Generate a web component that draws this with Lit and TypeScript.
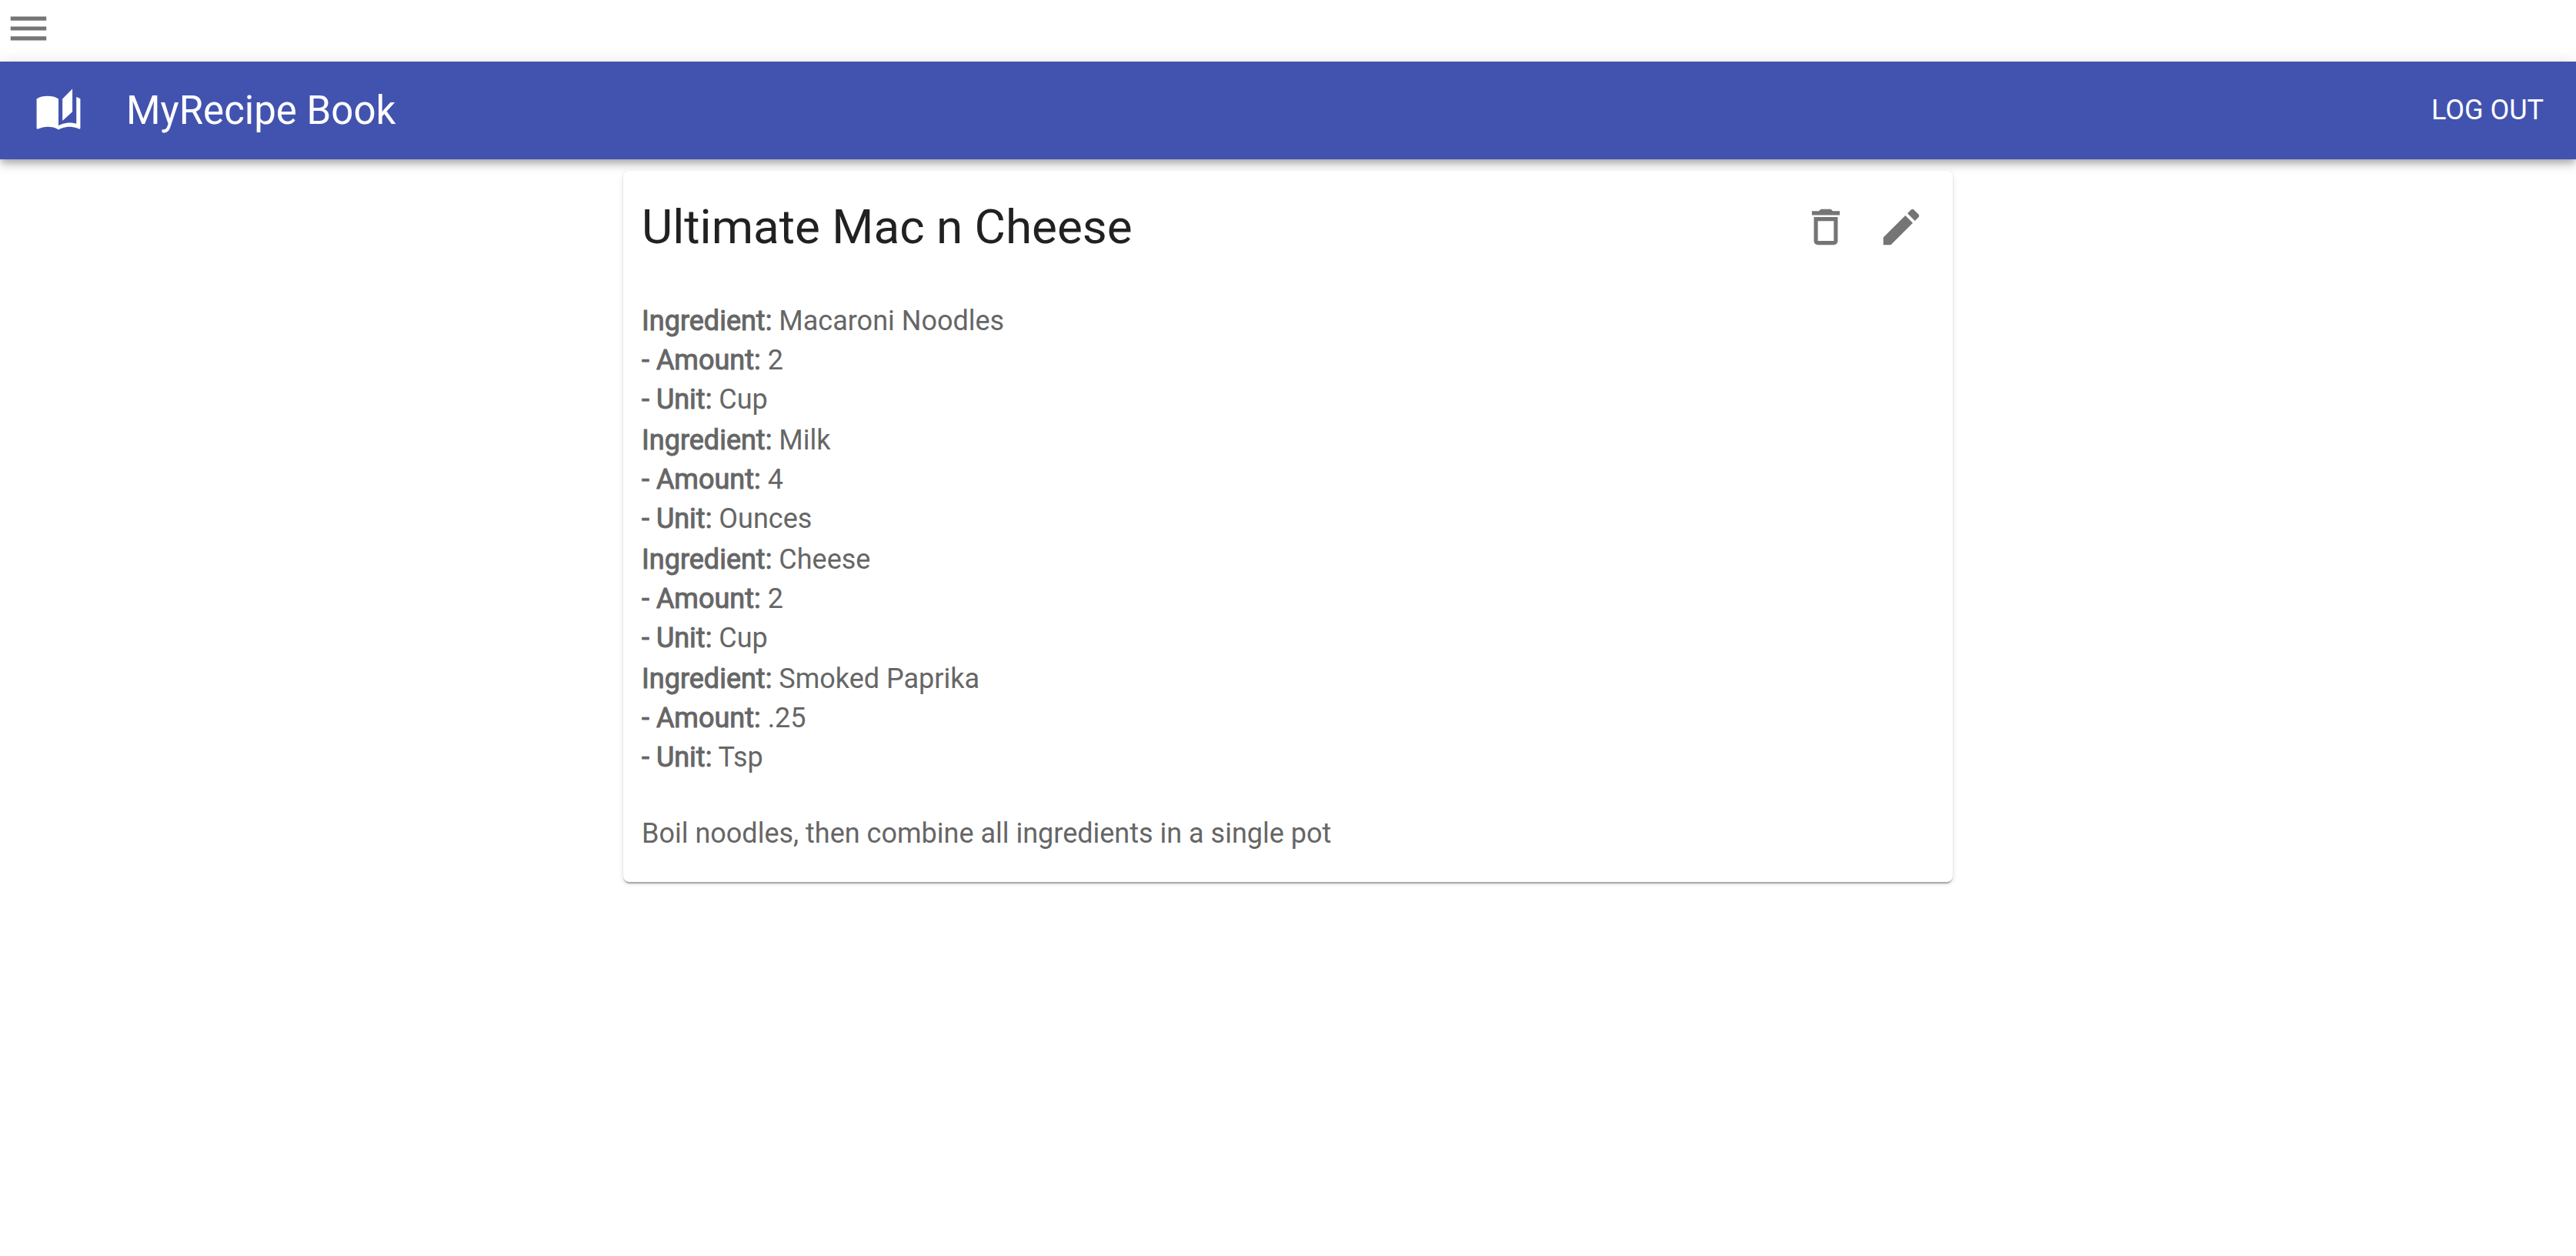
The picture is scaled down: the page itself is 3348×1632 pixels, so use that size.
import { LitElement, html, css } from "lit";
import { customElement, state } from "lit/decorators.js";

interface Ingredient {
  name: string;
  amount: string;
  unit: string;
}

@customElement("app-root")
export class AppRoot extends LitElement {
  static styles = css`
    :host {
      display: block;
      min-height: 100vh;
      background: #fff;
      color: rgba(0, 0, 0, 0.87);
      font-family: Roboto, "Liberation Sans", sans-serif;
      font-size: 36px;
      line-height: 51px;
    }
    button {
      display: flex;
      margin: 0;
      padding: 0;
      border: 0;
      background: none;
      color: inherit;
      font: inherit;
      cursor: pointer;
    }
    .icon {
      display: block;
      width: 62px;
      height: 62px;
      fill: currentColor;
    }
    .menu {
      display: flex;
      padding: 6px 6px 12px;
      color: #757575;
    }
    .bar {
      position: relative;
      display: flex;
      align-items: center;
      min-height: 127px;
      box-sizing: border-box;
      padding: 0 42px 0 45px;
      background: #4253af;
      color: #fff;
      box-shadow:
        0 4px 8px -2px rgba(0, 0, 0, 0.2),
        0 8px 10px 0 rgba(0, 0, 0, 0.14),
        0 2px 20px 0 rgba(0, 0, 0, 0.12);
    }
    .brand {
      flex: 1;
      margin: 0 0 0 57px;
      font-size: 51px;
      font-weight: 400;
      line-height: 82px;
    }
    .card {
      position: relative;
      max-width: 1728px;
      box-sizing: border-box;
      margin: 15px auto 0;
      padding: 32px 36px 37px 24px;
      border-radius: 8px;
      background: #fff;
      box-shadow:
        0 4px 2px -2px rgba(0, 0, 0, 0.2),
        0 2px 2px 0 rgba(0, 0, 0, 0.14),
        0 2px 6px 0 rgba(0, 0, 0, 0.12);
    }
    .head {
      display: flex;
      align-items: center;
      gap: 36px;
      margin-bottom: 56px;
      color: #757575;
    }
    .title {
      flex: 1;
      margin: 0;
      color: #212121;
      font-size: 62px;
      font-weight: 400;
      line-height: 82px;
    }
    .ingredients {
      display: grid;
      gap: 2px;
      margin: 0 0 48px;
      padding: 0;
      list-style: none;
      color: #666;
    }
    .label {
      font-weight: 400;
      -webkit-text-stroke: 1px currentColor;
    }
    .steps {
      margin: 0;
      color: #666;
    }
  `;

  @state() private ingredients: Ingredient[] = [
    { name: "Macaroni Noodles", amount: "2", unit: "Cup" },
    { name: "Milk", amount: "4", unit: "Ounces" },
    { name: "Cheese", amount: "2", unit: "Cup" },
    { name: "Smoked Paprika", amount: ".25", unit: "Tsp" },
  ];

  private icon(d: string) {
    return html`<svg class="icon" viewBox="0 0 24 24" aria-hidden="true"><path d=${d}></path></svg>`;
  }

  render() {
    return html`
      <nav class="menu">
        <button aria-label="Menu">${this.icon("M3 18h18v-2H3v2zm0-5h18v-2H3v2zm0-7v2h18V6H3z")}</button>
      </nav>
      <header class="bar">
        ${this.icon(
          "M19 1l-5 5v11l5-4.5V1zM1 6v14.65c0 .25.25.5.5.5.1 0 .15-.05.25-.05C3.1 20.45 5.05 20 6.5 20c1.95 0 4.05.4 5.5 1.5V6c-1.45-1.1-3.55-1.5-5.5-1.5S2.45 4.9 1 6zm22 13.5V6c-.6-.45-1.25-.75-2-1v13.5c-1.1-.35-2.3-.5-3.5-.5-1.7 0-4.15.65-5.5 1.5v2c1.35-.85 3.8-1.5 5.5-1.5 1.65 0 3.35.3 4.75 1.05.1.05.15.05.25.05.25 0 .5-.25.5-.5v-1.1z",
        )}
        <h1 class="brand">MyRecipe Book</h1>
        <button>LOG OUT</button>
      </header>
      <main>
        <article class="card">
          <div class="head">
            <h2 class="title">Ultimate Mac n Cheese</h2>
            <button aria-label="Delete recipe">
              ${this.icon(
                "M6 19c0 1.1.9 2 2 2h8c1.1 0 2-.9 2-2V7H6v12zM8 9h8v10H8V9zm7.5-5l-1-1h-5l-1 1H5v2h14V4z",
              )}
            </button>
            <button aria-label="Edit recipe">
              ${this.icon(
                "M3 17.25V21h3.75L17.81 9.94l-3.75-3.75L3 17.25zM20.71 7.04c.39-.39.39-1.02 0-1.41l-2.34-2.34c-.39-.39-1.02-.39-1.41 0l-1.83 1.83 3.75 3.75 1.83-1.83z",
              )}
            </button>
          </div>
          <ul class="ingredients">
            ${this.ingredients.map(
              (item) => html`
                <li>
                  <div><b class="label">Ingredient:</b> ${item.name}</div>
                  <div><b class="label">- Amount:</b> ${item.amount}</div>
                  <div><b class="label">- Unit:</b> ${item.unit}</div>
                </li>
              `,
            )}
          </ul>
          <p class="steps">Boil noodles, then combine all ingredients in a single pot</p>
        </article>
      </main>
    `;
  }
}
